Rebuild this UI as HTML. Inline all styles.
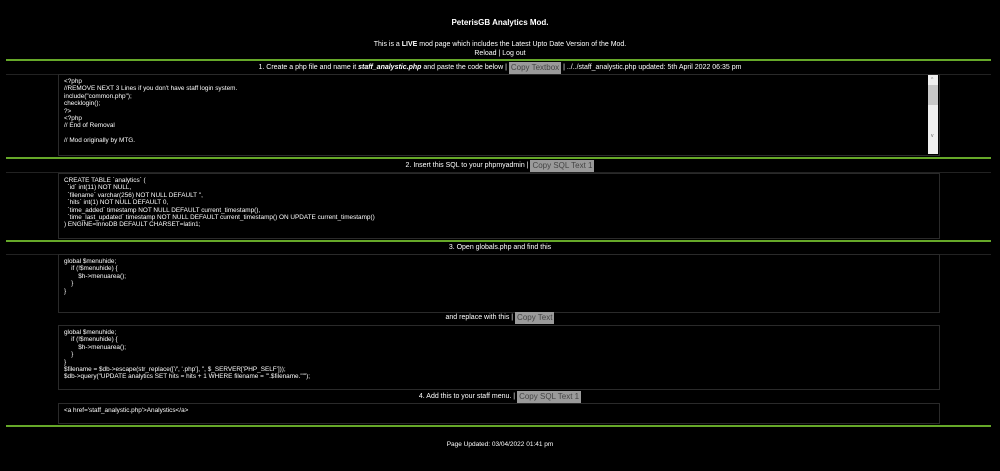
<!DOCTYPE html>
<html><head><style>
body{margin:0;background:#000;width:1000px;height:471px;overflow:hidden;position:relative;font-family:"Liberation Sans",sans-serif;color:#fff}
.a{position:absolute}
.c{left:0;width:1000px;text-align:center;font-size:7px;white-space:nowrap;line-height:12px;height:12px}
.g{position:absolute;left:6px;width:985px;height:2px;background:#66a829}
.d{position:absolute;left:6px;width:985px;height:1px;background:#222}
.ta{position:absolute;left:58px;border:1px solid #2a2a2a;background:#000;font-size:6.4px;line-height:7.4px;padding:3px 0 0 5px;white-space:pre;overflow:hidden;box-sizing:border-box;width:882px}
.b{display:inline-block;background:#9a9a9a;color:#444;padding:0 2px;font-size:8px;line-height:12px;height:12px;vertical-align:top;box-sizing:border-box}
</style></head><body>
<div class="a c" style="top:17px;font-size:8px;font-weight:bold">PeterisGB Analytics Mod.</div>
<div class="a c" style="top:39px">This is a <b>LIVE</b> mod page which includes the Latest Upto Date Version of the Mod.</div>
<div class="a c" style="top:48px">Reload | Log out</div>
<div class="g" style="top:59px"></div>
<div class="a c" style="top:62px">1. Create a php file and name it <b><i>staff_analystic.php</i></b> and paste the code below | <span class="b">Copy Textbox</span> | ../../staff_analystic.php updated: 5th April 2022 06:35 pm</div>
<div class="d" style="top:74px"></div>
<div class="ta" style="top:74px;height:82px">&lt;?php
//REMOVE NEXT 3 Lines if you don't have staff login system.
include("common.php");
checklogin();
?&gt;
&lt;?php
// End of Removal

// Mod originally by MTG.

. . . . . . . . . .</div>
<div class="a" style="left:928px;top:75px;width:10px;height:79px;background:#efefef"><div style="position:absolute;top:10px;left:0;width:10px;height:20px;background:#c8c8c8"></div><div style="position:absolute;top:2px;left:3px;font-size:5px;color:#888">^</div><div style="position:absolute;top:58px;left:3px;font-size:5px;color:#666">v</div></div>
<div class="g" style="top:157px"></div>
<div class="a c" style="top:160px">2. Insert this SQL to your phpmyadmin | <span class="b">Copy SQL Text 1</span></div>
<div class="d" style="top:172px"></div>
<div class="ta" style="top:173px;height:66px">CREATE TABLE `analytics` (
  `id` int(11) NOT NULL,
  `filename` varchar(256) NOT NULL DEFAULT '',
  `hits` int(1) NOT NULL DEFAULT 0,
  `time_added` timestamp NOT NULL DEFAULT current_timestamp(),
  `time_last_updated` timestamp NOT NULL DEFAULT current_timestamp() ON UPDATE current_timestamp()
) ENGINE=InnoDB DEFAULT CHARSET=latin1;</div>
<div class="g" style="top:240px"></div>
<div class="a c" style="top:242px">3. Open globals.php and find this</div>
<div class="d" style="top:254px"></div>
<div class="ta" style="top:254px;height:59px">global $menuhide;
    if (!$menuhide) {
        $h-&gt;menuarea();
    }
}</div>
<div class="a c" style="top:312px">and replace with this | <span class="b">Copy Text</span></div>
<div class="ta" style="top:325px;height:65px">global $menuhide;
    if (!$menuhide) {
        $h-&gt;menuarea();
    }
}
$filename = $db-&gt;escape(str_replace(['/', '.php'], '', $_SERVER['PHP_SELF']));
$db-&gt;query("UPDATE analytics SET hits = hits + 1 WHERE filename = '".$filename."'");</div>
<div class="a c" style="top:391px">4. Add this to your staff menu. | <span class="b">Copy SQL Text 1</span></div>
<div class="ta" style="top:403px;height:21px">&lt;a href='staff_analystic.php'&gt;Analystics&lt;/a&gt;</div>
<div class="g" style="top:425px"></div>
<div class="a c" style="top:439px;font-size:6.5px">Page Updated: 03/04/2022 01:41 pm</div>
</body></html>
